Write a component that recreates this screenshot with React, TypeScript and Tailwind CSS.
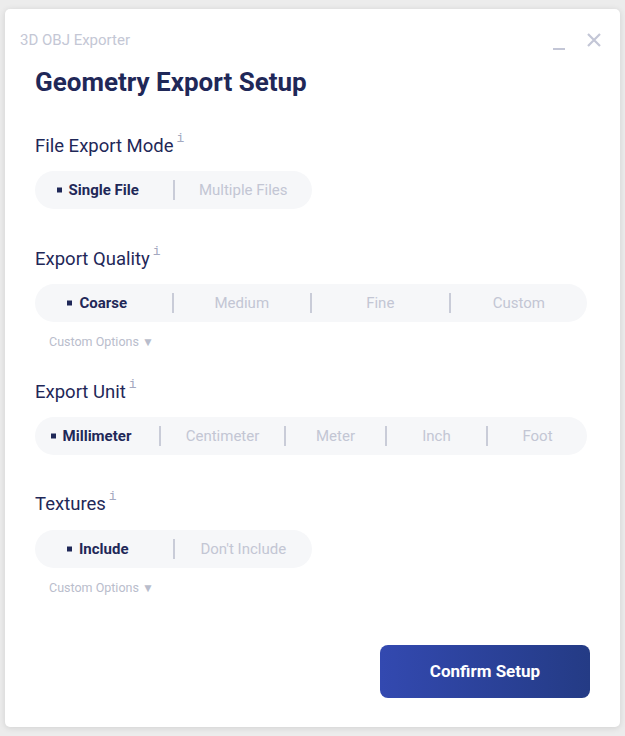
import React from "react";

const NAVY = "text-[#1f2858]";

function Info() {
  return (
    <span className="relative -top-[7px] ml-[3px] text-[13px] text-[#a3a8c0]" style={{ fontFamily: '"Liberation Mono", monospace' }}>
      i
    </span>
  );
}

function Label({ children, className = "" }: { children: React.ReactNode; className?: string }) {
  return (
    <div className={`flex items-end text-[18.5px] leading-[24px] ${NAVY} ${className}`}>
      <span>{children}</span>
      <Info />
    </div>
  );
}

type Opt = { label: string; w?: string };

function Pill({ options, width, selected = 0 }: { options: Opt[]; width: string; selected?: number }) {
  return (
    <div className={`flex h-[38px] items-center rounded-full bg-[#f6f7f9] ${width}`}>
      {options.map((o, i) => (
        <React.Fragment key={o.label}>
          {i > 0 && <div className="h-[20px] w-[2px] shrink-0 bg-[#c9ccd8]" />}
          <div className={`flex items-center justify-center ${o.w ?? "flex-1"}`}>
            <span
              className={`relative text-[15px] leading-[20px] ${
                i === selected ? `font-bold ${NAVY}` : "text-[#c3c6d4]"
              }`}
            >
              {i === selected && (
                <span className="absolute -left-[12px] top-1/2 h-[5px] w-[5px] -translate-y-1/2 bg-[#1f2858]" />
              )}
              {o.label}
            </span>
          </div>
        </React.Fragment>
      ))}
    </div>
  );
}

function CustomOptions() {
  return (
    <div className="mt-[12px] pl-[14px] text-[12.5px] leading-[16px] text-[#b9bdcc]">
      Custom Options <span className="text-[12px]">▼</span>
    </div>
  );
}

export default function App() {
  return (
    <div
      className="min-h-screen bg-[#ececec] pl-[5px] pt-[9px]"
      style={{ fontFamily: 'Roboto, "Noto Sans", sans-serif' }}
    >
      <div className="relative h-[718px] w-[615px] rounded-[5px] bg-white shadow-[0_1px_6px_rgba(0,0,0,0.12)]">
        <div className="flex items-start justify-between pl-[15px] pr-[19px] pt-[21px]">
          <div className="text-[15px] leading-[20px] text-[#c4c7d5]">3D OBJ Exporter</div>
          <div className="flex items-start gap-[22px] pt-[3px]">
            <div className="mt-[15px] h-[2px] w-[12px] bg-[#c3c6d6]" />
            <svg width="14" height="14" viewBox="0 0 14 14">
              <path d="M1 1 L13 13 M13 1 L1 13" stroke="#c3c6d6" strokeWidth="2.2" strokeLinecap="butt" />
            </svg>
          </div>
        </div>

        <div className="px-[30px]">
          <h1 className={`mt-[16px] text-[26px] font-bold leading-[32px] ${NAVY}`}>Geometry Export Setup</h1>

          <Label className="mt-[36px]">File Export Mode</Label>
          <div className="mt-[13px]">
            <Pill width="w-[277px]" options={[{ label: "Single File" }, { label: "Multiple Files" }]} />
          </div>

          <Label className="mt-[38px]">Export Quality</Label>
          <div className="mt-[13px]">
            <Pill
              width="w-[552px]"
              options={[{ label: "Coarse" }, { label: "Medium" }, { label: "Fine" }, { label: "Custom" }]}
            />
          </div>
          <CustomOptions />

          <Label className="mt-[30px]">Export Unit</Label>
          <div className="mt-[13px]">
            <Pill
              width="w-[552px]"
              options={[
                { label: "Millimeter", w: "w-[124px]" },
                { label: "Centimeter", w: "w-[123px]" },
                { label: "Meter", w: "w-[99px]" },
                { label: "Inch", w: "w-[99px]" },
                { label: "Foot", w: "flex-1" },
              ]}
            />
          </div>

          <Label className="mt-[37px]">Textures</Label>
          <div className="mt-[14px]">
            <Pill width="w-[277px]" options={[{ label: "Include" }, { label: "Don't Include" }]} />
          </div>
          <CustomOptions />

          <div className="mt-[49px] flex justify-end">
            <button className="h-[53px] w-[210px] rounded-[8px] bg-gradient-to-r from-[#3349b0] to-[#243b85] text-[17px] font-bold text-white">
              Confirm Setup
            </button>
          </div>
        </div>
      </div>
    </div>
  );
}
